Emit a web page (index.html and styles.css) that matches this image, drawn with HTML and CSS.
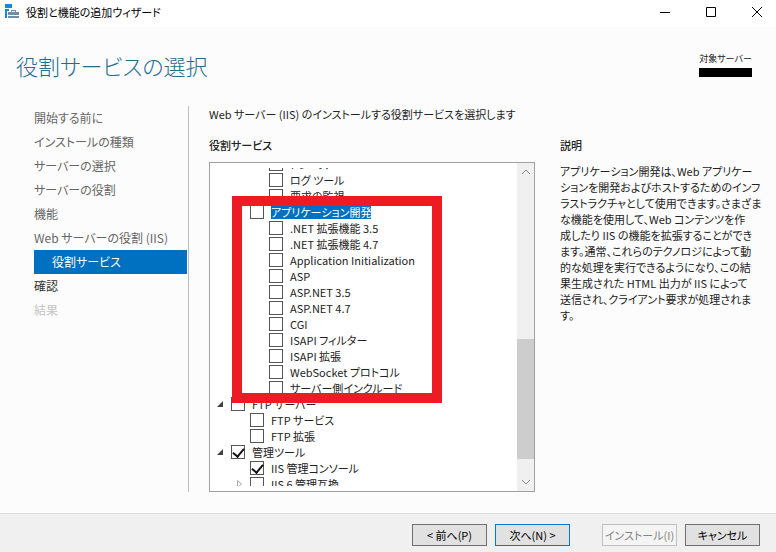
FILE: index.html
```html
<!DOCTYPE html>
<html lang="ja">
<head>
    <meta charset="UTF-8">
    <meta name="viewport" content="width=device-width, initial-scale=1.0">
    <title>役割と機能の追加ウィザード</title>
    <link rel="stylesheet" href="styles.css">
</head>
<body>

    <div class="titlebar">
        <svg class="app-icon" width="15" height="15" viewBox="0 0 15 15">
            <path fill="#1a86d9" d="M0 0h7v4H0zM0 5h4v2H2v7H0z"/>
            <path fill="#6f8ea6" d="M3 8h11v3H3zM3 12h11v2H3zM6 6h5v2h-1V7H7v1H6z"/>
        </svg>
        <span class="caption">役割と機能の追加ウィザード</span>
        <button class="win-btn" aria-label="最小化">
            <svg width="12" height="12"><path d="M1 6.500h10" stroke="#000"/></svg>
        </button>
        <button class="win-btn" aria-label="最大化">
            <svg width="12" height="12"><path d="M1.500 1.500h9v9h-9z" stroke="#000" fill="none"/></svg>
        </button>
        <button class="win-btn" aria-label="閉じる">
            <svg width="12" height="12"><path d="M1 1l10 10M11 1L1 11" stroke="#000"/></svg>
        </button>
    </div>

    <header class="header">
        <h1>役割サービスの選択</h1>
        <div class="target">
            <span>対象サーバー</span>
            <div class="masked"></div>
        </div>
    </header>

    <div class="content">
        <nav class="steps">
            <a href="#">開始する前に</a>
            <a href="#">インストールの種類</a>
            <a href="#">サーバーの選択</a>
            <a href="#">サーバーの役割</a>
            <a href="#">機能</a>
            <a href="#">Web サーバーの役割 (IIS)</a>
            <a href="#" class="sub current">役割サービス</a>
            <a href="#" class="ready">確認</a>
            <a href="#" class="disabled">結果</a>
        </nav>

        <main class="main">
            <p class="lead">Web サーバー (IIS) のインストールする役割サービスを選択します</p>
            <h2>役割サービス</h2>
            <div class="panel">
                <div class="tree">
                    <ul>
                        <li class="level3"><label><input type="checkbox"><span>トレース</span></label></li>
                        <li class="level3"><label><input type="checkbox"><span>ログ ツール</span></label></li>
                        <li class="level3"><label><input type="checkbox"><span>要求の監視</span></label></li>
                        <li class="level2"><label><input type="checkbox"><span class="selected">アプリケーション開発</span></label></li>
                        <li class="level3"><label><input type="checkbox"><span>.NET 拡張機能 3.5</span></label></li>
                        <li class="level3"><label><input type="checkbox"><span>.NET 拡張機能 4.7</span></label></li>
                        <li class="level3"><label><input type="checkbox"><span>Application Initialization</span></label></li>
                        <li class="level3"><label><input type="checkbox"><span>ASP</span></label></li>
                        <li class="level3"><label><input type="checkbox"><span>ASP.NET 3.5</span></label></li>
                        <li class="level3"><label><input type="checkbox"><span>ASP.NET 4.7</span></label></li>
                        <li class="level3"><label><input type="checkbox"><span>CGI</span></label></li>
                        <li class="level3"><label><input type="checkbox"><span>ISAPI フィルター</span></label></li>
                        <li class="level3"><label><input type="checkbox"><span>ISAPI 拡張</span></label></li>
                        <li class="level3"><label><input type="checkbox"><span>WebSocket プロトコル</span></label></li>
                        <li class="level3"><label><input type="checkbox"><span>サーバー側インクルード</span></label></li>
                        <li class="level1">
                            <svg class="arrow" width="8" height="8"><path d="M7 1v6H1z" fill="#404040"/></svg>
                            <label><input type="checkbox"><span>FTP サーバー</span></label>
                        </li>
                        <li class="level2"><label><input type="checkbox"><span>FTP サービス</span></label></li>
                        <li class="level2"><label><input type="checkbox"><span>FTP 拡張</span></label></li>
                        <li class="level1">
                            <svg class="arrow" width="8" height="8"><path d="M7 1v6H1z" fill="#404040"/></svg>
                            <label><input type="checkbox" checked><span>管理ツール</span></label>
                        </li>
                        <li class="level2"><label><input type="checkbox" checked><span>IIS 管理コンソール</span></label></li>
                        <li class="level2">
                            <svg class="arrow" width="8" height="8"><path d="M2.500.5v7l4-3.500z" fill="#fff" stroke="#a6a6a6"/></svg>
                            <label><input type="checkbox"><span>IIS 6 管理互換</span></label>
                        </li>
                    </ul>
                </div>
                <div class="scrollbar">
                    <svg width="17" height="17"><path d="M5 11l4-4 4 4" fill="none" stroke="#888"/></svg>
                    <div class="track"><div class="thumb"></div></div>
                    <svg width="17" height="17"><path d="M5 6l4 4 4-4" fill="none" stroke="#888"/></svg>
                </div>
                <div class="highlight"></div>
            </div>
        </main>

        <aside class="description">
            <h2>説明</h2>
            <p>アプリケーション開発は、Web アプリケー<br>
            ションを開発およびホストするためのインフ<br>
            ラストラクチャとして使用できます。さまざま<br>
            な機能を使用して、Web コンテンツを作<br>
            成したり IIS の機能を拡張することができ<br>
            ます。通常、これらのテクノロジによって動<br>
            的な処理を実行できるようになり、この結<br>
            果生成された HTML 出力が IIS によって<br>
            送信され、クライアント要求が処理されま<br>
            す。</p>
        </aside>
    </div>

    <footer class="footer">
        <button class="btn">&lt; 前へ(P)</button>
        <button class="btn next">次へ(N) &gt;</button>
        <button class="btn install" disabled>インストール(I)</button>
        <button class="btn">キャンセル</button>
    </footer>

</body>
</html>
```
FILE: styles.css
```css
* {
    box-sizing: border-box;
}

body {
    margin: 0;
    min-height: 100vh;
    display: flex;
    flex-direction: column;
    font-family: "Noto Sans CJK JP", sans-serif;
    font-feature-settings: "palt";
    font-size: 11px;
    line-height: 16px;
    color: #222;
    background-color: #fcfcfc;
}

h1, h2, p, ul {
    margin: 0;
    padding: 0;
}

button {
    font: inherit;
    font-feature-settings: inherit;
}

/* Title bar */
.titlebar {
    display: flex;
    align-items: center;
    height: 27px;
    padding-bottom: 4px;
    background-color: #fff;
}

.app-icon {
    margin-left: 5px;
}

.caption {
    margin-left: 6px;
    margin-right: auto;
    color: #000;
}

.win-btn {
    display: flex;
    align-items: center;
    justify-content: center;
    width: 46px;
    height: 23px;
    padding: 0;
    border: none;
    background: none;
}

.win-btn:last-child {
    width: 42px;
    padding-left: 4px;
}

/* Page header */
.header {
    display: flex;
    justify-content: space-between;
    height: 79px;
    padding: 22px 24px 0 16px;
}

h1 {
    font-size: 22px;
    font-weight: 300;
    line-height: 32px;
    color: #1c6e93;
}

.target {
    width: 53px;
    font-size: 9px;
    line-height: 19px;
    text-align: center;
    white-space: nowrap;
}

.masked {
    height: 9px;
    background-color: #000;
}

.content {
    flex: 1;
    display: grid;
    grid-template-columns: 155px minmax(0, 1fr) 192px;
    padding: 0 24px 21px 34px;
}

/* Steps on the left */
.steps {
    padding-right: 1px;
    border-right: 1px solid #bdbdbd;
}

.steps a {
    display: block;
    font-size: 12px;
    line-height: 24px;
    color: #666;
    text-decoration: none;
    white-space: nowrap;
}

.steps .sub {
    padding-left: 18px;
}

.steps .current {
    color: #fff;
    background-color: #0070c0;
}

.steps .ready {
    color: #333;
}

.steps .disabled {
    color: #c4c4c4;
}

/* Role service tree */
.main {
    display: flex;
    flex-direction: column;
    padding: 0 25px 0 20px;
}

.lead {
    white-space: nowrap;
}

h2 {
    margin-top: 15px;
    font-size: 11px;
    font-weight: 500;
    line-height: 16px;
}

.panel {
    position: relative;
    flex: 1;
    display: flex;
    margin-top: 9px;
    border: 1px solid #a0a0a0;
    background-color: #fff;
}

.tree {
    flex: 1;
    height: 318px;
    margin: 5px 0;
    overflow: hidden;
}

.tree ul {
    margin-top: -12px;
    list-style-type: none;
}

.tree li {
    display: flex;
    align-items: center;
    height: 16px;
    white-space: nowrap;
}

.tree label {
    display: flex;
    align-items: center;
    gap: 7px;
}

.level1 {
    padding-left: 21px;
}

.level2 {
    padding-left: 40px;
}

.level3 {
    padding-left: 59px;
}

.arrow {
    margin-left: -15px;
    margin-right: 7px;
}

.tree input {
    appearance: none;
    display: flex;
    justify-content: center;
    width: 14px;
    height: 14px;
    margin: 0;
    border: 1px solid #555;
    background-color: #fff;
}

.tree input:checked::before {
    content: "";
    width: 5px;
    height: 9px;
    border: solid #111;
    border-width: 0 2px 2px 0;
    transform: rotate(40deg);
}

.selected {
    line-height: 14px;
    color: #fff;
    background-color: #0070c0;
}

.scrollbar {
    display: flex;
    flex-direction: column;
    width: 17px;
    background-color: #f0f0f0;
}

.track {
    flex: 1;
    display: flex;
    flex-direction: column;
    justify-content: flex-end;
    padding-bottom: 15px;
}

.thumb {
    height: 43%;
    background-color: #cdcdcd;
}

.highlight {
    position: absolute;
    left: 22px;
    top: 33px;
    width: 210px;
    height: 207px;
    border: 10px solid #ed1c24;
}

/* Description */
.description {
    padding-top: 16px;
}

.description p {
    margin-top: 10px;
    white-space: nowrap;
}

/* Buttons */
.footer {
    display: flex;
    justify-content: flex-end;
    gap: 8px;
    padding: 10px 16px 6px;
    border-top: 1px solid #dadada;
    background-color: #f0f0f0;
}

.btn {
    width: 75px;
    height: 22px;
    padding: 0;
    border: 1px solid #707070;
    background-color: #e1e1e1;
    color: #000;
    white-space: nowrap;
}

.next {
    border-color: #0078d7;
}

.install {
    margin-left: 24px;
    border-color: #bfbfbf;
    background-color: #f4f4f4;
    color: #838383;
}
```
